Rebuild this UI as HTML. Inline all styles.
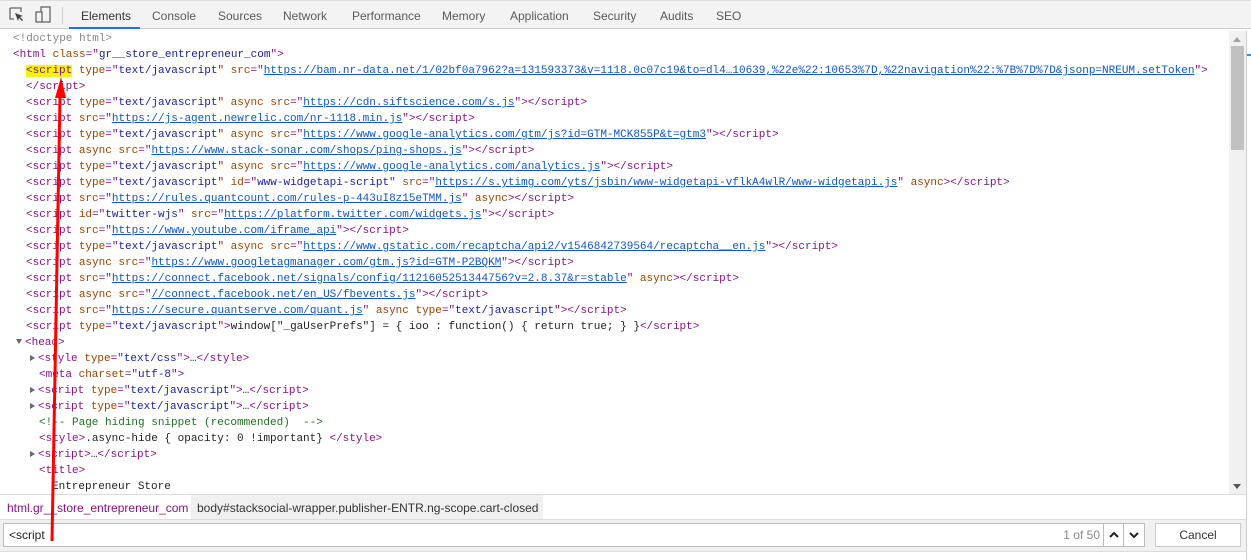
<!DOCTYPE html>
<html><head><style>
*{margin:0;padding:0;box-sizing:border-box}
html,body{width:1251px;height:560px;overflow:hidden}
body{background:#fff;position:relative;font-family:"Liberation Sans",sans-serif}
#tb{position:absolute;left:0;top:0;width:1251px;height:29px;background:#f3f3f3;border-bottom:1px solid #ccc;border-top:1px solid #ddd}
.tab{position:absolute;top:8px;font-size:12px;color:#5a5a5a}
#code{position:absolute;left:0;top:31px;width:1229px;height:463px;overflow:hidden;font-family:"Liberation Mono",monospace;font-size:11px;line-height:16px;color:#222}
.l{height:16px;white-space:pre}
.t{color:#881280}.a{color:#994500}.v{color:#1a1aa6}.u{text-decoration:underline;color:#1155cc}.g{color:#888}.c{color:#236e25}
.tri{display:inline-block;width:0;height:0;border-left:5px solid #666;border-top:3.5px solid transparent;border-bottom:3.5px solid transparent;margin-right:3px}
.trd{display:inline-block;width:0;height:0;border-top:5px solid #666;border-left:3.5px solid transparent;border-right:3.5px solid transparent;margin-right:3px;vertical-align:1px}
</style></head><body>
<div style="position:absolute;left:1150px;top:0;width:101px;height:2px;background:#222"></div>
<div id="tb">
<svg style="position:absolute;left:9px;top:6px" width="16" height="16" viewBox="0 0 16 16"><path d="M1 1h11v4M1 1v11h4" fill="none" stroke="#666" stroke-width="1.3"/><path d="M6 6l8 3-3 1 3 3-1 1-3-3-1 3z" fill="#444"/></svg>
<svg style="position:absolute;left:35px;top:5px" width="16" height="18" viewBox="0 0 16 18"><rect x="6" y="1" width="9" height="15" fill="none" stroke="#666" stroke-width="1.3"/><rect x="1" y="6" width="6" height="10" fill="#f3f3f3" stroke="#666" stroke-width="1.3"/></svg>
<div style="position:absolute;left:62px;top:6px;width:1px;height:17px;background:#ccc"></div>
<div class="tab" style="left:81px;color:#333">Elements</div>
<div style="position:absolute;left:69px;top:26px;width:71px;height:2px;background:#1a73e8"></div>
<div class="tab" style="left:152px">Console</div>
<div class="tab" style="left:218px">Sources</div>
<div class="tab" style="left:283px">Network</div>
<div class="tab" style="left:352px">Performance</div>
<div class="tab" style="left:442px">Memory</div>
<div class="tab" style="left:510px">Application</div>
<div class="tab" style="left:593px">Security</div>
<div class="tab" style="left:660px">Audits</div>
<div class="tab" style="left:716px">SEO</div>
</div>
<div id="code"><div class="l"><span style="padding-left:13px" class="g">&lt;!doctype html&gt;</span></div><div class="l" style="padding-left:13px"><span class="t">&lt;html </span><span class="a">class</span><span class="t">="</span><span class="v">gr__store_entrepreneur_com</span><span class="t">"&gt;</span></div><div class="l" style="padding-left:26px"><span class="t"><span style="background:#f4f40a">&lt;script</span> </span><span class="a">type</span><span class="t">="</span><span class="v">text/javascript</span><span class="t">" </span><span class="a">src</span><span class="t">="</span><span class="u">https://bam.nr-data.net/1/02bf0a7962?a=131593373&amp;v=1118.0c07c19&amp;to=dl4…10639,%22e%22:10653%7D,%22navigation%22:%7B%7D%7D&amp;jsonp=NREUM.setToken</span><span class="t">"&gt;</span></div><div class="l" style="padding-left:26px"><span class="t">&lt;/script&gt;</span></div><div class="l" style="padding-left:26px"><span class="t">&lt;script </span><span class="a">type</span><span class="t">="</span><span class="v">text/javascript</span><span class="t">" </span><span class="a">async src</span><span class="t">="</span><span class="u">https://cdn.siftscience.com/s.js</span><span class="t">"&gt;&lt;/script&gt;</span></div><div class="l" style="padding-left:26px"><span class="t">&lt;script </span><span class="a">src</span><span class="t">="</span><span class="u">https://js-agent.newrelic.com/nr-1118.min.js</span><span class="t">"&gt;&lt;/script&gt;</span></div><div class="l" style="padding-left:26px"><span class="t">&lt;script </span><span class="a">type</span><span class="t">="</span><span class="v">text/javascript</span><span class="t">" </span><span class="a">async src</span><span class="t">="</span><span class="u">https://www.google-analytics.com/gtm/js?id=GTM-MCK855P&amp;t=gtm3</span><span class="t">"&gt;&lt;/script&gt;</span></div><div class="l" style="padding-left:26px"><span class="t">&lt;script </span><span class="a">async src</span><span class="t">="</span><span class="u">https://www.stack-sonar.com/shops/ping-shops.js</span><span class="t">"&gt;&lt;/script&gt;</span></div><div class="l" style="padding-left:26px"><span class="t">&lt;script </span><span class="a">type</span><span class="t">="</span><span class="v">text/javascript</span><span class="t">" </span><span class="a">async src</span><span class="t">="</span><span class="u">https://www.google-analytics.com/analytics.js</span><span class="t">"&gt;&lt;/script&gt;</span></div><div class="l" style="padding-left:26px"><span class="t">&lt;script </span><span class="a">type</span><span class="t">="</span><span class="v">text/javascript</span><span class="t">" </span><span class="a">id</span><span class="t">="</span><span class="v">www-widgetapi-script</span><span class="t">" </span><span class="a">src</span><span class="t">="</span><span class="u">https://s.ytimg.com/yts/jsbin/www-widgetapi-vflkA4wlR/www-widgetapi.js</span><span class="t">" </span><span class="a">async</span><span class="t">&gt;&lt;/script&gt;</span></div><div class="l" style="padding-left:26px"><span class="t">&lt;script </span><span class="a">src</span><span class="t">="</span><span class="u">https://rules.quantcount.com/rules-p-443uI8z15eTMM.js</span><span class="t">" </span><span class="a">async</span><span class="t">&gt;&lt;/script&gt;</span></div><div class="l" style="padding-left:26px"><span class="t">&lt;script </span><span class="a">id</span><span class="t">="</span><span class="v">twitter-wjs</span><span class="t">" </span><span class="a">src</span><span class="t">="</span><span class="u">https://platform.twitter.com/widgets.js</span><span class="t">"&gt;&lt;/script&gt;</span></div><div class="l" style="padding-left:26px"><span class="t">&lt;script </span><span class="a">src</span><span class="t">="</span><span class="u">https://www.youtube.com/iframe_api</span><span class="t">"&gt;&lt;/script&gt;</span></div><div class="l" style="padding-left:26px"><span class="t">&lt;script </span><span class="a">type</span><span class="t">="</span><span class="v">text/javascript</span><span class="t">" </span><span class="a">async src</span><span class="t">="</span><span class="u">https://www.gstatic.com/recaptcha/api2/v1546842739564/recaptcha__en.js</span><span class="t">"&gt;&lt;/script&gt;</span></div><div class="l" style="padding-left:26px"><span class="t">&lt;script </span><span class="a">async src</span><span class="t">="</span><span class="u">https://www.googletagmanager.com/gtm.js?id=GTM-P2BQKM</span><span class="t">"&gt;&lt;/script&gt;</span></div><div class="l" style="padding-left:26px"><span class="t">&lt;script </span><span class="a">src</span><span class="t">="</span><span class="u">https://connect.facebook.net/signals/config/1121605251344756?v=2.8.37&amp;r=stable</span><span class="t">" </span><span class="a">async</span><span class="t">&gt;&lt;/script&gt;</span></div><div class="l" style="padding-left:26px"><span class="t">&lt;script </span><span class="a">async src</span><span class="t">="</span><span class="u">//connect.facebook.net/en_US/fbevents.js</span><span class="t">"&gt;&lt;/script&gt;</span></div><div class="l" style="padding-left:26px"><span class="t">&lt;script </span><span class="a">src</span><span class="t">="</span><span class="u">https://secure.quantserve.com/quant.js</span><span class="t">" </span><span class="a">async type</span><span class="t">="</span><span class="v">text/javascript</span><span class="t">"&gt;&lt;/script&gt;</span></div><div class="l" style="padding-left:26px"><span class="t">&lt;script </span><span class="a">type</span><span class="t">="</span><span class="v">text/javascript</span><span class="t">"&gt;</span>window["_gaUserPrefs"] = { ioo : function() { return true; } }<span class="t">&lt;/script&gt;</span></div><div class="l" style="padding-left:16px"><span class="trd"></span><span class="t">&lt;head&gt;</span></div><div class="l" style="padding-left:30px"><span class="tri"></span><span class="t">&lt;style </span><span class="a">type</span><span class="t">="</span><span class="v">text/css</span><span class="t">"&gt;</span>…<span class="t">&lt;/style&gt;</span></div><div class="l" style="padding-left:39px"><span class="t">&lt;meta </span><span class="a">charset</span><span class="t">="</span><span class="v">utf-8</span><span class="t">"&gt;</span></div><div class="l" style="padding-left:30px"><span class="tri"></span><span class="t">&lt;script </span><span class="a">type</span><span class="t">="</span><span class="v">text/javascript</span><span class="t">"&gt;</span>…<span class="t">&lt;/script&gt;</span></div><div class="l" style="padding-left:30px"><span class="tri"></span><span class="t">&lt;script </span><span class="a">type</span><span class="t">="</span><span class="v">text/javascript</span><span class="t">"&gt;</span>…<span class="t">&lt;/script&gt;</span></div><div class="l" style="padding-left:39px"><span class="c">&lt;!-- Page hiding snippet (recommended)  --&gt;</span></div><div class="l" style="padding-left:39px"><span class="t">&lt;style&gt;</span>.async-hide { opacity: 0 !important} <span class="t">&lt;/style&gt;</span></div><div class="l" style="padding-left:30px"><span class="tri"></span><span class="t">&lt;script&gt;</span>…<span class="t">&lt;/script&gt;</span></div><div class="l" style="padding-left:39px"><span class="t">&lt;title&gt;</span></div><div class="l" style="padding-left:52px">Entrepreneur Store</div></div>
<div style="position:absolute;left:1229px;top:31px;width:17px;height:463px;background:#f1f1f1"></div>
<div style="position:absolute;left:1231px;top:46px;width:13px;height:104px;background:#c1c1c1"></div>
<div style="position:absolute;left:1233px;top:37px;border-bottom:5px solid #a3a3a3;border-left:4.5px solid transparent;border-right:4.5px solid transparent"></div>
<div style="position:absolute;left:1233px;top:484px;border-top:5px solid #555;border-left:4.5px solid transparent;border-right:4.5px solid transparent"></div>
<div style="position:absolute;left:1246px;top:31px;width:1px;height:529px;background:#ccc"></div>
<div style="position:absolute;left:1247px;top:54px;width:4px;height:2px;background:#1a9ae8"></div>
<div style="position:absolute;left:0;top:494px;width:1246px;height:26px;background:#fff;border-top:1px solid #ddd;border-bottom:1px solid #ddd">
<div style="position:absolute;left:0;top:0;width:191px;height:24px;background:#fff;font-size:12px;padding:6px 0 0 7px;color:#881280;white-space:nowrap">html.gr__store_entrepreneur_com</div>
<div style="position:absolute;left:191px;top:0;width:352px;height:24px;background:#f0f0f0;font-size:12px;padding:6px 0 0 6px;color:#333;white-space:nowrap">body#stacksocial-wrapper.publisher-ENTR.ng-scope.cart-closed</div>
</div>
<div style="position:absolute;left:0;top:520px;width:1246px;height:32px;background:#f1f1f1;border-bottom:1px solid #ddd"></div>
<div style="position:absolute;left:3px;top:523px;width:1142px;height:24px;background:#fff;border:1px solid #bbb;font-size:12px;padding:4px 0 0 5px;color:#222">&lt;script
<span style="position:absolute;right:44px;top:4px;color:#888">1 of 50</span>
<div style="position:absolute;right:40px;top:0;width:1px;height:22px;background:#bbb"></div>
<div style="position:absolute;right:20px;top:0;width:1px;height:22px;background:#bbb"></div>
<svg style="position:absolute;right:23px;top:7px" width="14" height="8" viewBox="0 0 14 8"><path d="M3 6l4-4 4 4" fill="none" stroke="#222" stroke-width="2"/></svg>
<svg style="position:absolute;right:3px;top:7px" width="14" height="8" viewBox="0 0 14 8"><path d="M3 2l4 4 4-4" fill="none" stroke="#222" stroke-width="2"/></svg>
</div>
<div style="position:absolute;left:1155px;top:523px;width:86px;height:24px;background:#fff;border:1px solid #ccc;font-size:12px;text-align:center;padding-top:4px;color:#333">Cancel</div>
<svg style="position:absolute;left:0;top:0" width="1251" height="560"><path d="M52 541L60 96" stroke="#f00" stroke-width="3" fill="none"/><path d="M61 77L55 98L66 98Z" fill="#f00"/></svg>
</body></html>
